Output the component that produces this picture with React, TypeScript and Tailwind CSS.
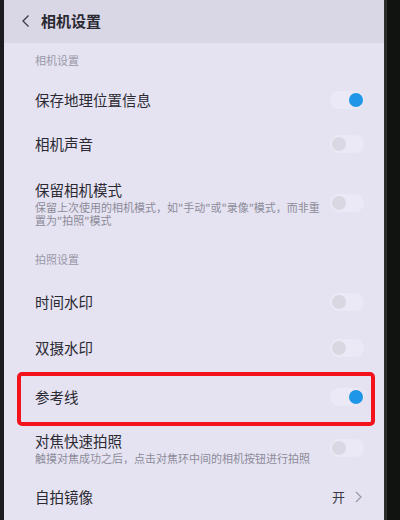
import React from 'react';

const font = { fontFamily: '"Noto Sans CJK SC", "Noto Sans", sans-serif' };

function Toggle({ on }: { on: boolean }) {
  return (
    <div className="relative h-[18px] w-[34px] shrink-0 rounded-full bg-[#eae9f5]">
      <div
        className={`absolute top-[2px] h-[14px] w-[14px] rounded-full ${
          on ? 'right-[1px] bg-[#1f96e8]' : 'left-[2px] bg-[#d9d8e2]'
        }`}
      />
    </div>
  );
}

function Row({ title, sub, on, h, right }: { title: string; sub?: string; on?: boolean; h: number; right?: React.ReactNode }) {
  return (
    <div className="flex items-center pl-[31px] pr-[20px]" style={{ height: h }}>
      <div className="flex-1 pr-[4px]">
        <div className="text-[14.5px] leading-[20px] text-[#2b2a33]">{title}</div>
        {sub && <div className="mt-[1px] text-[11px] leading-[13px] text-[#8d8b99]">{sub}</div>}
      </div>
      {right ?? <Toggle on={!!on} />}
    </div>
  );
}

function Section({ label, h }: { label: string; h: number }) {
  return (
    <div className="flex items-center pl-[31px] text-[11px] text-[#9a98a8]" style={{ height: h }}>
      {label}
    </div>
  );
}

export default function App() {
  return (
    <div className="flex h-[520px] w-[400px] overflow-hidden bg-[#151815]" style={font}>
      <div className="w-[4px] bg-[#1c1c20]" />
      <div className="flex w-[380px] flex-col bg-[#e5e3f1]">
        <div className="flex h-[43px] items-center bg-[#d9d6e5] pl-[17px]">
          <svg width="10" height="14" viewBox="0 0 10 14" fill="none">
            <path d="M7.5 1.5 L2 7 L7.5 12.5" stroke="#3a3944" strokeWidth="1.3" />
          </svg>
          <span className="ml-[10px] text-[15px] font-bold text-[#2a2932]">相机设置</span>
        </div>
        <Section label="相机设置" h={36} />
        <Row title="保存地理位置信息" on h={44} />
        <Row title="相机声音" h={46} />
        <Row
          title="保留相机模式"
          sub={'保留上次使用的相机模式，如"手动"或"录像"模式，而非重置为"拍照"模式'}
          h={73}
        />
        <Section label="拍照设置" h={40} />
        <Row title="时间水印" h={46} />
        <Row title="双摄水印" h={47} />
        <div className="relative">
          <Row title="参考线" on h={51} />
          <div className="pointer-events-none absolute left-[13px] right-[9px] top-[1px] h-[54px] rounded-[5px] border-[4px] border-[#f4121c]" />
        </div>
        <Row title="对焦快速拍照" sub="触摸对焦成功之后，点击对焦环中间的相机按钮进行拍照" h={53} />
        <Row
          title="自拍镜像"
          h={46}
          right={
            <div className="flex items-center gap-[10px] pr-[2px] text-[13px] text-[#3a3944]">
              <span>开</span>
              <svg width="7" height="12" viewBox="0 0 7 12" fill="none">
                <path d="M1 1 L6 6 L1 11" stroke="#9a98a8" strokeWidth="1.2" />
              </svg>
            </div>
          }
        />
      </div>
      <div className="flex flex-1">
        <div className="w-[3px] bg-[#2a2e28]" />
        <div className="flex-1 bg-[#111311]" />
      </div>
    </div>
  );
}
